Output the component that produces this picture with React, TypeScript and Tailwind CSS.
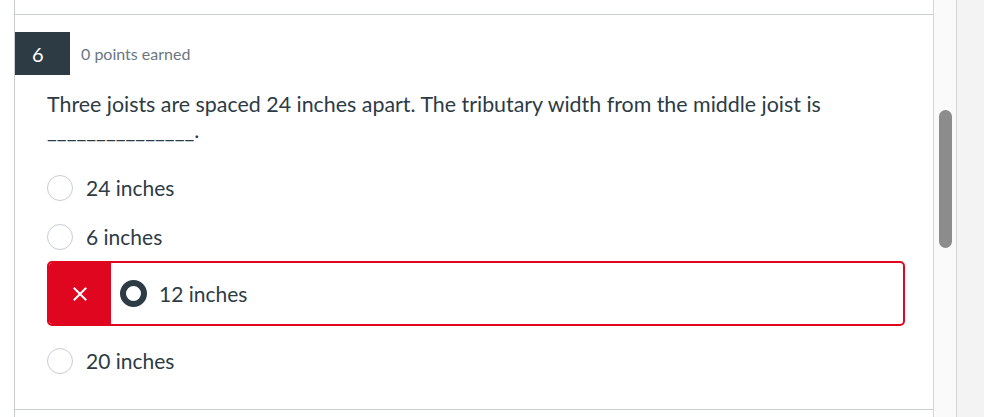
import React from 'react';

const options = [
  { label: '24 inches' },
  { label: '6 inches' },
  { label: '12 inches', picked: true, wrong: true },
  { label: '20 inches' },
];

const Radio: React.FC<{ checked?: boolean }> = ({ checked }) =>
  checked ? (
    <span className="block h-[27px] w-[27px] shrink-0 rounded-full border-[6px] border-[#2d3b45] bg-white" />
  ) : (
    <span className="block h-[26px] w-[26px] shrink-0 rounded-full border border-[#c7cdd1] bg-white" />
  );

const XIcon = () => (
  <svg width="14" height="14" viewBox="0 0 14 14" fill="none">
    <path d="M1.5 1.5 L12.5 12.5 M12.5 1.5 L1.5 12.5" stroke="white" strokeWidth="2" strokeLinecap="square" />
  </svg>
);

export default function App() {
  return (
    <div
      className="flex h-[417px] w-[984px] overflow-hidden bg-white text-[#2d3b45]"
      style={{ fontFamily: 'Lato, "Open Sans", sans-serif' }}
    >
      {/* page content */}
      <div className="w-[933px] shrink-0 pl-[14px]">
        <div className="h-full border-l border-[#c7cdd1]">
          <div className="h-[14px]" />
          <div className="h-[396px] border-t border-b border-[#c7cdd1]">
            {/* header */}
            <div className="mt-[17px] flex items-center">
              <div className="flex h-[43px] w-[55px] items-center bg-[#2d3b45] pl-[17px] text-[20px] text-white">
                6
              </div>
              <span className="ml-[11px] text-[16px] text-[#6b7780]">0 points earned</span>
            </div>

            {/* question */}
            <div className="pl-[32px] pr-[28px]">
              <p className="mt-[16px] text-[21.4px] leading-[26px]">
                Three joists are spaced 24 inches apart. The tributary width from the middle joist is
                <br />
                _______________.
              </p>

              <div className="mt-[20px]">
                {options.map((o) =>
                  o.wrong ? (
                    <div
                      key={o.label}
                      className="mb-[10px] flex h-[65px] items-stretch overflow-hidden rounded-[5px] border-2 border-[#e0061f]"
                    >
                      <div className="flex w-[62px] items-center justify-center bg-[#e0061f]">
                        <XIcon />
                      </div>
                      <div className="flex items-center pl-[9px]">
                        <Radio checked />
                        <span className="ml-[12px] text-[21px]">{o.label}</span>
                      </div>
                    </div>
                  ) : (
                    <div key={o.label} className="flex h-[49px] items-center">
                      <Radio />
                      <span className="ml-[13px] text-[21px]">{o.label}</span>
                    </div>
                  )
                )}
              </div>
            </div>
          </div>
        </div>
      </div>

      {/* scrollbar */}
      <div className="w-[24px] shrink-0 border-l border-r border-[#d4d4d4] bg-[#fafafa] pl-[5px] pt-[110px]">
        <div className="h-[138px] w-[13px] rounded-full bg-[#8c8c8c]" />
      </div>
      <div className="flex-1 bg-[#f3f3f3]" />
    </div>
  );
}
